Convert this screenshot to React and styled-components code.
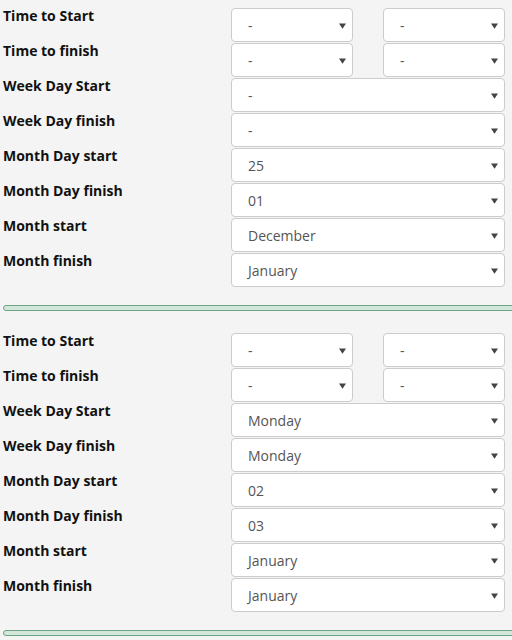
import React from 'react'
import styled, { createGlobalStyle } from 'styled-components'

const Global = createGlobalStyle`
  html, body {
    margin: 0;
    padding: 0;
    background: #f4f4f4;
    font-family: "Open Sans", "Liberation Sans", sans-serif;
    overflow: hidden;
  }
`

const Page = styled.div`
  padding: 8px 7px 0 3px;
`

const Block = styled.div`
  display: flex;
  flex-direction: column;
  gap: 1px;
`

const Row = styled.div`
  display: grid;
  grid-template-columns: 228px 1fr;
  height: 34px;
`

const Label = styled.div`
  font-size: 14px;
  font-weight: 700;
  color: #111;
  line-height: 20px;
  margin-top: -2px;
`

const Pair = styled.div`
  display: flex;
  gap: 30px;
`

const SelectBox = styled.div`
  box-sizing: border-box;
  height: 34px;
  width: ${p => (p.half ? '122px' : '274px')};
  background: #fff;
  border: 1px solid #cccccc;
  border-radius: 4px;
  display: flex;
  align-items: center;
  justify-content: space-between;
  padding: 1px 6px 0 16px;
  font-size: 14px;
  color: #555;
`

const Rule = styled.div`
  box-sizing: border-box;
  height: 6px;
  margin: 18px -20px 22px 0;
  background: #d2e7da;
  border: 1px solid #6ea383;
  border-radius: 3px 0 0 3px;
`

const Arrow = () => (
  <svg width="7" height="6" viewBox="0 0 7 6">
    <path d="M0 0.5 H7 L3.5 5.8 Z" fill="#444" />
  </svg>
)

const Select = ({ value, half }) => (
  <SelectBox half={half}>
    <span>{value}</span>
    <Arrow />
  </SelectBox>
)

const schedules = [
  { times: ['-', '-', '-', '-'], wdStart: '-', wdFinish: '-', mdStart: '25', mdFinish: '01', mStart: 'December', mFinish: 'January' },
  { times: ['-', '-', '-', '-'], wdStart: 'Monday', wdFinish: 'Monday', mdStart: '02', mdFinish: '03', mStart: 'January', mFinish: 'January' },
]

function Schedule({ s }) {
  const single = [
    ['Week Day Start', s.wdStart],
    ['Week Day finish', s.wdFinish],
    ['Month Day start', s.mdStart],
    ['Month Day finish', s.mdFinish],
    ['Month start', s.mStart],
    ['Month finish', s.mFinish],
  ]
  return (
    <Block>
      <Row>
        <Label>Time to Start</Label>
        <Pair>
          <Select half value={s.times[0]} />
          <Select half value={s.times[1]} />
        </Pair>
      </Row>
      <Row>
        <Label>Time to finish</Label>
        <Pair>
          <Select half value={s.times[2]} />
          <Select half value={s.times[3]} />
        </Pair>
      </Row>
      {single.map(([label, value]) => (
        <Row key={label}>
          <Label>{label}</Label>
          <Select value={value} />
        </Row>
      ))}
    </Block>
  )
}

export default function App() {
  return (
    <Page>
      <Global />
      {schedules.map((s, i) => (
        <React.Fragment key={i}>
          <Schedule s={s} />
          <Rule />
        </React.Fragment>
      ))}
    </Page>
  )
}
